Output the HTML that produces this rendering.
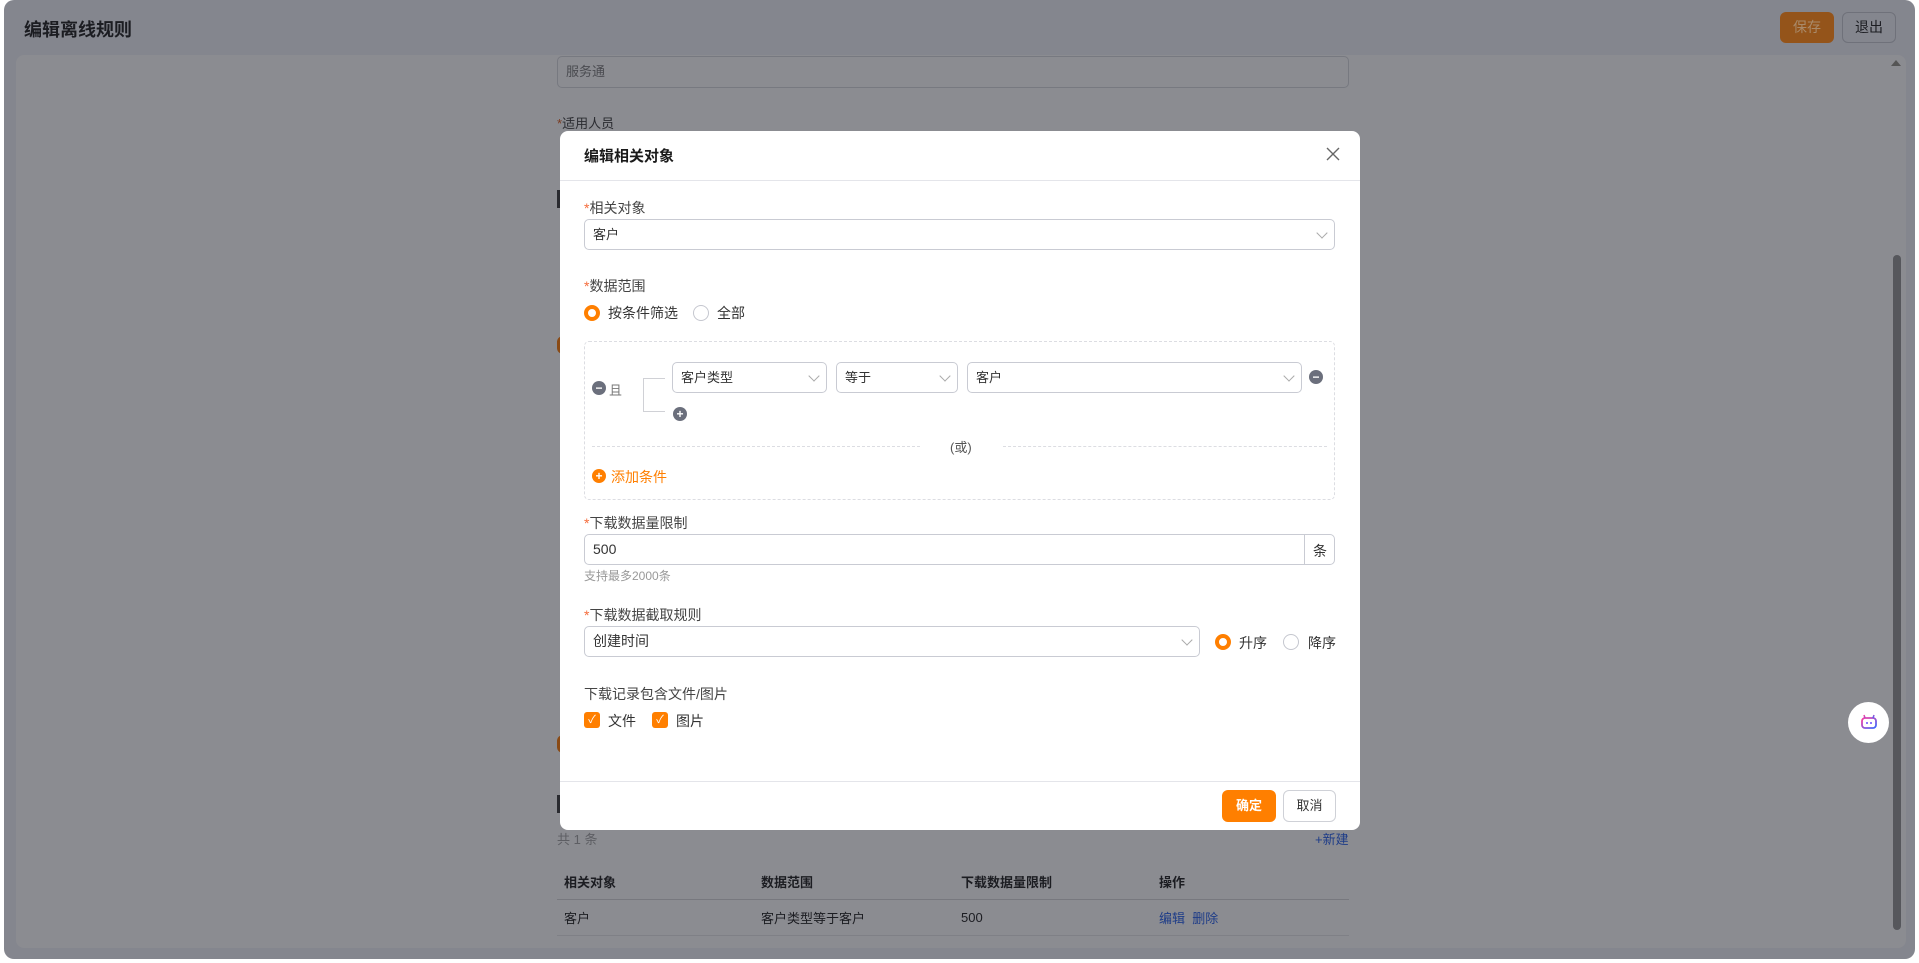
<!DOCTYPE html>
<html><head><meta charset="utf-8"><style>
*{box-sizing:border-box;margin:0;padding:0}
body{width:1919px;height:963px;background:#fff;font-family:"Liberation Sans","Noto Sans CJK SC",sans-serif;font-size:14px;color:#333;position:relative;overflow:hidden}
.a{position:absolute}
.frame{left:4px;top:0;width:1911px;height:959px;background:#84868e;border-radius:10px}
.content{left:16px;top:55px;width:1890px;height:893px;background:#8b8c91;border-radius:8px}
.dt{color:#1c1d22}
.sel{border:1px solid #c9cbd3;border-radius:5px;background:#fff;height:31px;padding:0 8px;line-height:29px;font-size:13px;color:#333}
.chev{position:absolute;right:8px;top:9px;width:8px;height:8px;border-right:1px solid #aaa;border-bottom:1px solid #aaa;transform:rotate(45deg)}
.lbl{font-size:14px;color:#444}
.star{color:#f56c3c}
.radio{width:16px;height:16px;border-radius:50%;border:1px solid #c5c7cf;background:#fff}
.radio.on{border:4px solid #ff7f00}
.cb{width:16px;height:16px;border-radius:3px;background:#ff7f00;color:#fff;font-size:11px;line-height:16px;text-align:center}
.ic{width:14px;height:14px;border-radius:50%;background:#6b6f7c;color:#fff;font-size:12px;line-height:14px;text-align:center;font-weight:bold}
</style></head><body>
<div class="a frame"></div>
<div class="a dt" style="left:24px;top:16px;font-size:18px;font-weight:bold">编辑离线规则</div>
<div class="a" style="left:1780px;top:12px;width:54px;height:31px;background:#94541a;border-radius:6px;color:#a98a6a;text-align:center;line-height:31px;font-size:14px">保存</div>
<div class="a" style="left:1842px;top:12px;width:54px;height:31px;border:1px solid #6f717a;border-radius:6px;color:#1c1d22;text-align:center;line-height:29px;font-size:14px">退出</div>
<div class="a content"></div>
<div class="a" style="left:1893px;top:255px;width:8px;height:675px;background:#56575c;border-radius:4px"></div>
<div class="a" style="left:1891px;top:60px;width:0;height:0;border-left:5px solid transparent;border-right:5px solid transparent;border-bottom:6px solid #555"></div>
<!-- background form -->
<div class="a" style="left:557px;top:56px;width:792px;height:32px;border:1px solid #777980;border-radius:5px;padding-left:8px;line-height:30px;font-size:13px;color:#4a4b50">服务通</div>
<div class="a" style="left:557px;top:113px;font-size:13px;color:#2a2b30"><span style="color:#7a3a20">*</span>适用人员</div>
<div class="a" style="left:557px;top:190px;width:3px;height:18px;background:#2a2b30"></div>
<div class="a" style="left:557px;top:336px;width:6px;height:18px;border-radius:6px 0 0 6px;background:#8a4a14"></div>
<div class="a" style="left:557px;top:735px;width:6px;height:18px;border-radius:6px 0 0 6px;background:#8a4a14"></div>
<div class="a" style="left:557px;top:795px;width:3px;height:18px;background:#2a2b30"></div>
<div class="a" style="left:557px;top:829px;font-size:13px;color:#5d5e63">共 1 条</div>
<div class="a" style="left:1315px;top:829px;font-size:13px;color:#1e3c88">+新建</div>
<div class="a" style="left:564px;top:872px;font-size:13px;font-weight:bold;color:#1c1d22">相关对象</div>
<div class="a" style="left:761px;top:872px;font-size:13px;font-weight:bold;color:#1c1d22">数据范围</div>
<div class="a" style="left:961px;top:872px;font-size:13px;font-weight:bold;color:#1c1d22">下载数据量限制</div>
<div class="a" style="left:1159px;top:872px;font-size:13px;font-weight:bold;color:#1c1d22">操作</div>
<div class="a" style="left:557px;top:899px;width:792px;height:1px;background:#77787e"></div>
<div class="a" style="left:564px;top:908px;font-size:13px;color:#1c1d22">客户</div>
<div class="a" style="left:761px;top:908px;font-size:13px;color:#1c1d22">客户类型等于客户</div>
<div class="a" style="left:961px;top:909px;font-size:13px;line-height:17px;color:#1c1d22">500</div>
<div class="a" style="left:1159px;top:908px;font-size:13px;color:#1e3c88">编辑&nbsp;&nbsp;删除</div>
<div class="a" style="left:557px;top:935px;width:792px;height:1px;background:#7f8086"></div>
<!-- bot -->
<div class="a" style="left:1848px;top:702px;width:41px;height:41px;border-radius:50%;background:#fff"></div>
<svg class="a" style="left:1859px;top:712px" width="20" height="20" viewBox="0 0 20 20"><defs><linearGradient id="g" x1="0" y1="0" x2="1" y2="1"><stop offset="0" stop-color="#ff3ca0"/><stop offset="1" stop-color="#3a6bff"/></linearGradient></defs><rect x="3" y="6" width="14" height="10" rx="3" fill="none" stroke="url(#g)" stroke-width="1.8"/><path d="M6 6 L5 3 M14 6 L15 3" stroke="url(#g)" stroke-width="1.5"/><circle cx="8" cy="11" r="1" fill="#6a4cff"/><circle cx="12" cy="11" r="1" fill="#6a4cff"/></svg>
<!-- dialog -->
<div class="a" style="left:560px;top:131px;width:800px;height:699px;background:#fff;border-radius:8px"></div>
<div class="a" style="left:584px;top:145px;font-size:15px;font-weight:bold;color:#1a1a1a">编辑相关对象</div>
<svg class="a" style="left:1326px;top:147px" width="14" height="14" viewBox="0 0 14 14"><path d="M1 1L13 13M13 1L1 13" stroke="#666" stroke-width="1.4"/></svg>
<div class="a" style="left:560px;top:180px;width:800px;height:1px;background:#e4e5ea"></div>
<div class="a lbl" style="left:584px;top:198px"><span class="star">*</span>相关对象</div>
<div class="a sel" style="left:584px;top:219px;width:751px">客户<span class="chev"></span></div>
<div class="a lbl" style="left:584px;top:276px"><span class="star">*</span>数据范围</div>
<div class="a radio on" style="left:584px;top:305px"></div>
<div class="a" style="left:608px;top:303px;font-size:14px">按条件筛选</div>
<div class="a radio" style="left:693px;top:305px"></div>
<div class="a" style="left:717px;top:303px;font-size:14px">全部</div>
<div class="a" style="left:584px;top:341px;width:751px;height:159px;border:1px dashed #dcdde2;border-radius:5px"></div>
<div class="a ic" style="left:592px;top:381px">−</div>
<div class="a" style="left:609px;top:380px;font-size:13px;color:#777">且</div>
<div class="a" style="left:643px;top:378px;width:22px;height:34px;border:1px solid #d0d1d6;border-right:none"></div>
<div class="a sel" style="left:672px;top:362px;width:155px">客户类型<span class="chev"></span></div>
<div class="a sel" style="left:836px;top:362px;width:122px">等于<span class="chev"></span></div>
<div class="a sel" style="left:967px;top:362px;width:335px">客户<span class="chev"></span></div>
<div class="a ic" style="left:1309px;top:370px">−</div>
<div class="a ic" style="left:673px;top:407px">+</div>
<div class="a" style="left:592px;top:446px;width:328px;border-top:1px dashed #dcdde2"></div>
<div class="a" style="left:1003px;top:446px;width:324px;border-top:1px dashed #dcdde2"></div>
<div class="a" style="left:950px;top:437px;font-size:13px;color:#555">(或)</div>
<div class="a ic" style="left:592px;top:469px;background:#ff7f00">+</div>
<div class="a" style="left:611px;top:467px;font-size:14px;color:#ff7f00">添加条件</div>
<div class="a lbl" style="left:584px;top:513px"><span class="star">*</span>下载数据量限制</div>
<div class="a sel" style="left:584px;top:534px;width:751px;font-size:14px">500</div>
<div class="a" style="left:1304px;top:535px;width:1px;height:29px;background:#c9cbd3"></div>
<div class="a" style="left:1313px;top:541px;font-size:14px">条</div>
<div class="a" style="left:584px;top:567px;font-size:12px;color:#999">支持最多2000条</div>
<div class="a lbl" style="left:584px;top:605px"><span class="star">*</span>下载数据截取规则</div>
<div class="a sel" style="left:584px;top:626px;width:616px;font-size:14px">创建时间<span class="chev"></span></div>
<div class="a radio on" style="left:1215px;top:634px"></div>
<div class="a" style="left:1239px;top:633px;font-size:14px">升序</div>
<div class="a radio" style="left:1283px;top:634px"></div>
<div class="a" style="left:1308px;top:633px;font-size:14px">降序</div>
<div class="a lbl" style="left:584px;top:684px">下载记录包含文件/图片</div>
<div class="a cb" style="left:584px;top:712px">✓</div>
<div class="a" style="left:608px;top:711px;font-size:14px">文件</div>
<div class="a cb" style="left:652px;top:712px">✓</div>
<div class="a" style="left:676px;top:711px;font-size:14px">图片</div>
<div class="a" style="left:560px;top:781px;width:800px;height:1px;background:#e4e5ea"></div>
<div class="a" style="left:1222px;top:790px;width:54px;height:32px;background:#ff7f00;border-radius:6px;color:#fff;font-weight:bold;text-align:center;line-height:32px;font-size:13px">确定</div>
<div class="a" style="left:1283px;top:790px;width:53px;height:32px;border:1px solid #cfd1d7;border-radius:6px;color:#333;text-align:center;line-height:30px;font-size:13px">取消</div>
</body></html>
